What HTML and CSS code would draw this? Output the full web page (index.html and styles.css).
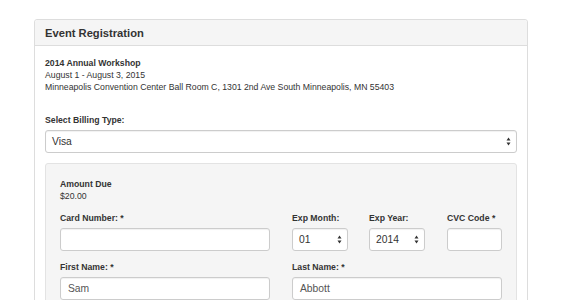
FILE: index.html
```html
<!DOCTYPE html>
<html>
<head>
<meta charset="utf-8">
<link rel="stylesheet" href="styles.css">
</head>
<body>
<div class="panel">
  <div class="panel-heading"><h3 class="panel-title">Event Registration</h3></div>
  <div class="panel-body">
    <div class="event">
      <div class="event-name">2014 Annual Workshop</div>
      <div>August 1 - August 3, 2015</div>
      <div>Minneapolis Convention Center Ball Room C, 1301 2nd Ave South Minneapolis, MN 55403</div>
    </div>
    <div class="group">
      <label class="label">Select Billing Type:</label>
      <div class="control select"><span>Visa</span><svg class="arrows" width="5" height="9" viewBox="0 0 5 9"><path d="M2.5 0.5 L4.5 3.5 L0.5 3.5 Z M2.5 8.5 L4.5 5.5 L0.5 5.5 Z" fill="#333"/></svg></div>
    </div>
    <div class="well">
      <div class="amount">
        <div class="label">Amount Due</div>
        <div>$20.00</div>
      </div>
      <div class="row row1">
        <div class="field">
          <label class="label">Card Number: *</label>
          <div class="control"></div>
        </div>
        <div class="field">
          <label class="label">Exp Month:</label>
          <div class="control select"><span>01</span><svg class="arrows" width="5" height="9" viewBox="0 0 5 9"><path d="M2.5 0.5 L4.5 3.5 L0.5 3.5 Z M2.5 8.5 L4.5 5.5 L0.5 5.5 Z" fill="#333"/></svg></div>
        </div>
        <div class="field">
          <label class="label">Exp Year:</label>
          <div class="control select"><span>2014</span><svg class="arrows" width="5" height="9" viewBox="0 0 5 9"><path d="M2.5 0.5 L4.5 3.5 L0.5 3.5 Z M2.5 8.5 L4.5 5.5 L0.5 5.5 Z" fill="#333"/></svg></div>
        </div>
        <div class="field">
          <label class="label">CVC Code *</label>
          <div class="control"></div>
        </div>
      </div>
      <div class="row row2">
        <div class="field">
          <label class="label">First Name: *</label>
          <div class="control"><span>Sam</span></div>
        </div>
        <div class="field">
          <label class="label">Last Name: *</label>
          <div class="control"><span>Abbott</span></div>
        </div>
      </div>
    </div>
  </div>
</div>
</body>
</html>
```
FILE: styles.css
```css
* { box-sizing: border-box; }
html, body { margin: 0; padding: 0; background: #fff; }
body {
  font-family: "Liberation Sans", Arial, Helvetica, sans-serif;
  font-size: 8.7px;
  line-height: 12px;
  color: #333;
  overflow: hidden;
  height: 300px;
}
.panel {
  margin: 19px 0 0 34px;
  width: 494px;
  border: 1px solid #ddd;
  border-radius: 3px;
  background: #fff;
}
.panel-heading {
  background: #f5f5f5;
  border-bottom: 1px solid #ddd;
  padding: 7px 10px 6px;
  border-radius: 3px 3px 0 0;
}
.panel-title {
  margin: 0;
  font-size: 11.2px;
  line-height: 12px;
  font-weight: bold;
  color: #333;
}
.panel-body { padding: 11px 10px 10px; }
.event { margin-bottom: 21px; }
.event-name { font-weight: bold; }
.label { display: block; font-weight: bold; margin-bottom: 4px; }
.group { margin-bottom: 10px; }
.control {
  height: 23px;
  border: 1px solid #ccc;
  border-radius: 3px;
  background: #fff;
  display: flex;
  align-items: center;
  padding: 0 7px;
  font-size: 10.3px;
  color: #555;
  box-shadow: inset 0 1px 1px rgba(0,0,0,0.06);
}
.control span { flex: 1; }
.select { color: #333; padding: 0 5px 0 6px; }
.arrows { flex: none; }
.well {
  background: #f5f5f5;
  border: 1px solid #e3e3e3;
  border-radius: 3px;
  padding: 14px 14px;
}
.amount { margin-bottom: 10px; }
.amount .label { margin-bottom: 0; }
.row { display: flex; }
.row1 { margin-bottom: 10px; }
.row1 .field:nth-child(1) { width: 210px; margin-right: 22px; }
.row1 .field:nth-child(2) { width: 56px; margin-right: 21px; }
.row1 .field:nth-child(3) { width: 56px; margin-right: 22px; }
.row1 .field:nth-child(4) { width: 55px; }
.row2 .field:nth-child(1) { width: 210px; margin-right: 22px; }
.row2 .field:nth-child(2) { width: 210px; }
```
